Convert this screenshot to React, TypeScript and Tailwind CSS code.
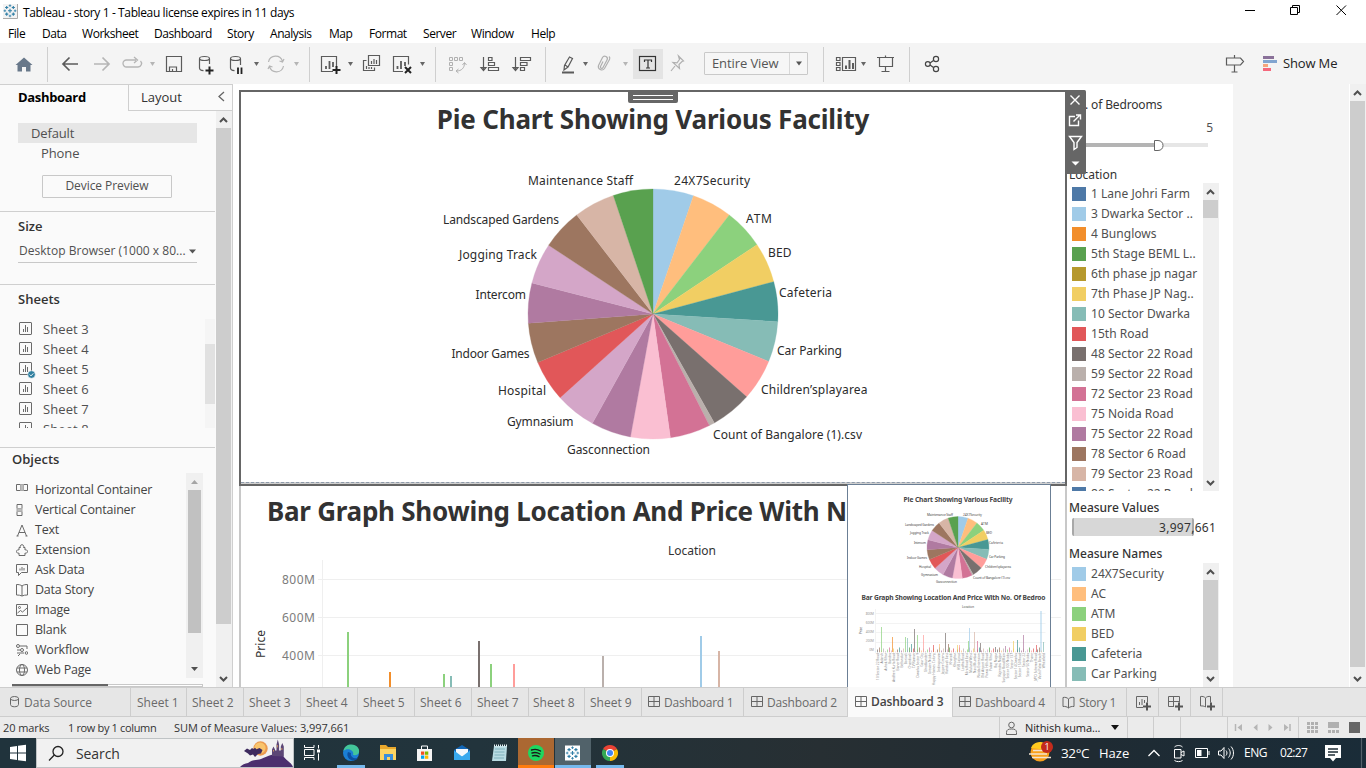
import React from "react";

type Kids = { children?: React.ReactNode };

const SLICES: [string, number][] = [
  ["#a0cbe8", 18.9], ["#ffbe7d", 37.6], ["#8cd17d", 56.3], ["#f1ce63", 75], ["#499894", 93.5],
  ["#86bcb6", 112.3], ["#ff9d9a", 131.5], ["#79706e", 150.6], ["#bab0ac", 153.2], ["#d37295", 172],
  ["#fabfd2", 190.4], ["#b07aa1", 209], ["#d4a6c8", 228], ["#e15759", 247.2], ["#9d7660", 265.8],
  ["#b07aa1", 284.4], ["#d4a6c8", 303.4], ["#9d7660", 322.4], ["#d7b5a6", 341.5], ["#59a14f", 360],
];

function Pie({ cx, cy, r }: { cx: number; cy: number; r: number }) {
  const pt = (a: number) => {
    const t = (a * Math.PI) / 180;
    return `${(cx + r * Math.sin(t)).toFixed(2)} ${(cy - r * Math.cos(t)).toFixed(2)}`;
  };
  return (
    <g>
      {SLICES.map(([c, end], i) => {
        const start = i ? SLICES[i - 1][1] : 0;
        return <path key={i} fill={c} stroke={c} strokeWidth={0.3} d={`M${cx} ${cy}L${pt(start)}A${r} ${r} 0 0 1 ${pt(end)}Z`} />;
      })}
    </g>
  );
}

const LABELS: [string, number, number, number][] = [
  ["24X7Security", 674, 185, 76], ["ATM", 746, 223, 26], ["BED", 768, 257, 23.5], ["Cafeteria", 779, 297, 53],
  ["Car Parking", 777, 355, 65], ["Children’splayarea", 761, 394, 106.5], ["Count of Bangalore (1).csv", 713, 439, 149],
  ["Gasconnection", 567, 454, 83], ["Gymnasium", 507, 426, 66.5], ["Hospital", 498, 395, 48],
  ["Indoor Games", 451.5, 358, 78], ["Intercom", 475.5, 299, 50.5], ["Jogging Track", 459, 259, 78],
  ["Landscaped Gardens", 443, 224, 116], ["Maintenance Staff", 528, 185, 105],
];

const BARS: [number, number, string][] = [
  [347, 632, "#8cd17d"], [389, 672, "#f28e2b"], [443, 674, "#8cd17d"], [450, 676, "#86bcb6"], [478, 641, "#79706e"],
  [490, 664, "#8cd17d"], [513, 664, "#ff9d9a"], [602, 656, "#bab0ac"], [700, 636, "#a0cbe8"], [718, 651, "#d7b5a6"],
];

const MINI_LABELS: [string, number, number, number][] = [
  ["Maintenance Staff", 927, 515.5, 26], ["24X7Security", 963, 515.5, 19], ["ATM", 981, 525, 7], ["BED", 986, 533.5, 6],
  ["Landscaped Gardens", 905, 525.5, 29], ["Jogging Track", 910, 534, 19], ["Intercom", 914, 544, 12], ["Cafeteria", 989, 544, 14],
  ["Indoor Games", 907, 558.5, 20], ["Car Parking", 989, 558, 16], ["Hospital", 919, 568, 12], ["Children’splayarea", 985, 568, 26],
  ["Gymnasium", 921, 575.5, 17], ["Gasconnection", 936, 582.5, 21], ["Count of Bangalore (1).csv", 973, 579, 37],
];
const MINI_BARS: [number, number, string][] = [
  [881, 627, "#8cd17d"], [892, 637, "#f28e2b"], [905, 637, "#8cd17d"], [907, 638, "#86bcb6"], [911, 644, "#499894"],
  [914, 629, "#79706e"], [917, 635, "#8cd17d"], [923, 635, "#ff9d9a"], [933, 645, "#e15759"], [939, 644, "#ffbe7d"],
  [945, 633, "#79706e"], [948, 644, "#9d7660"], [957, 645, "#f1ce63"], [959, 645, "#ff9d9a"], [968, 641, "#8cd17d"], [969, 628, "#a0cbe8"],
  [974, 632, "#d7b5a6"], [977, 641, "#d37295"], [980, 643, "#79706e"], [995, 647, "#79706e"], [1005, 646, "#b07aa1"], [1013, 641, "#f1ce63"],
  [1017, 640, "#499894"], [1023, 635, "#b07aa1"], [1036, 645, "#e15759"], [1040, 611, "#a0cbe8"], [1043, 642, "#86bcb6"],
];
const MINI_AXIS = [
  "10 Sector 22 Road", "Adarsh", "Ashok Vihar", "Bandra", "Andheri Kurla Road", "Baner Road", "Bellandur", "Borivali",
  "Chandivali", "CV Raman", "Dwarka Sector 9", "Gaur City", "Ghodbunder", "Greater Noida", "Happy Homes Colony",
  "Indirapuram", "Jaypee Greens", "Kandivali East", "Kharadi", "Kharghar", "HSR Layout", "Lodha Road", "Mira Road East",
  "Mulund West", "Navi Mumbai", "Noida Extension", "Old Airport Road", "Powai Hills Road", "Palam Vihar", "Raj Nagar",
  "Rajendra Nagar", "Sarjapur Road Main", "Sector 100 Noida", "Sector 137", "Sector 14 Dwarka", "Sector 150 Road",
  "Sector 22", "Sector 50 Noida", "Thane", "JVPD Scheme Road", "Vashi Palm Beach", "Whitefield",
];

const LOCATIONS: [string, string][] = [
  ["#4e79a7", "1 Lane Johri Farm"], ["#a0cbe8", "3 Dwarka Sector .."], ["#f28e2b", "4 Bunglows"], ["#59a14f", "5th Stage BEML L.."],
  ["#b6992d", "6th phase jp nagar"], ["#f1ce63", "7th Phase JP Nag.."], ["#86bcb6", "10 Sector Dwarka"], ["#e15759", "15th Road"],
  ["#79706e", "48 Sector 22 Road"], ["#bab0ac", "59 Sector 22 Road"], ["#d37295", "72 Sector 23 Road"], ["#fabfd2", "75 Noida Road"],
  ["#b07aa1", "75 Sector 22 Road"], ["#9d7660", "78 Sector 6 Road"], ["#d7b5a6", "79 Sector 23 Road"], ["#4e79a7", "80 Sector 22 Road"],
];
const MEASURES: [string, string][] = [
  ["#a0cbe8", "24X7Security"], ["#ffbe7d", "AC"], ["#8cd17d", "ATM"], ["#f1ce63", "BED"], ["#499894", "Cafeteria"], ["#86bcb6", "Car Parking"], ["#ff9d9a", ""],
];

/* An icon slot whose viewBox uses window coordinates, so neighbouring slots tile the bar. */
function Slot({ x, w, y = 43, h = 41, c = "#5b5b5b", sw = 1.2, children }: Kids & { x: number; w: number; y?: number; h?: number; c?: string; sw?: number }) {
  return (
    <svg className="shrink-0" width={w} height={h} viewBox={`${x} ${y} ${w} ${h}`} fill="none" stroke={c} strokeWidth={sw}>
      {children}
    </svg>
  );
}
const Caret = ({ x, y = 62, c = "#666" }: { x: number; y?: number; c?: string }) => <path d={`M${x + 0.5} ${y}h5l-2.500 4z`} fill={c} stroke="none" />;
const Sep = ({ x }: { x: number }) => <path d={`M${x + 0.5} 47v35`} stroke="#cfcfcf" strokeWidth={1} />;

function TableauMark({ x, y, s = 1, c = "#2f7ea6" }: { x: number; y: number; s?: number; c?: string }) {
  const plus = (a: number, b: number, r: number) => `M${a - r} ${b}h${2 * r}M${a} ${b - r}v${2 * r}`;
  return (
    <g transform={`translate(${x} ${y}) scale(${s})`} stroke={c} fill="none" strokeWidth={1.2}>
      <path d={plus(0, 0, 2.2) + plus(-3.6, -3.6, 1.7) + plus(3.6, -3.6, 1.7) + plus(-3.6, 3.6, 1.7) + plus(3.6, 3.6, 1.7)} />
      <path d={plus(0, -5.6, 1.4) + plus(0, 5.6, 1.4) + plus(-5.6, 0, 1.4) + plus(5.6, 0, 1.4)} strokeWidth={0.9} />
    </g>
  );
}

function TitleBar() {
  return (
    <header className="flex h-[24px] shrink-0 items-center bg-white">
      <svg width="23" height="24" viewBox="0 0 23 24">
        <rect x="3" y="4" width="14" height="14" fill="#f3f3f3" />
        <path d="M3 18.5h14.5V4" stroke="#aaa" fill="none" />
        <TableauMark x={10} y={10.8} s={0.92} />
      </svg>
      <span className="w-[280px] pt-px font-['Open_Sans','Noto_Sans',sans-serif] text-[12px] tracking-[-0.38px] text-black">
        Tableau - story 1 - Tableau license expires in 11 days
      </span>
      <svg className="ml-auto" width="131" height="24" viewBox="1235 0 131 24" fill="none" stroke="#000">
        <path d="M1245 10.5h10M1290.500 7.500h7v7h-7zM1292.500 7v-1.500h7v7h-2M1336.500 5.500l9.500 9.500M1346 5.500l-9.500 9.500" />
      </svg>
    </header>
  );
}

function MenuBar() {
  return (
    <nav className="flex h-[19px] shrink-0 items-center bg-white pl-2 font-['Open_Sans','Noto_Sans',sans-serif] text-[12px] tracking-[-0.45px] text-black">
      <span className="w-[34px]">File</span>
      <span className="w-[40px]">Data</span>
      <span className="w-[72px]">Worksheet</span>
      <span className="w-[73px]">Dashboard</span>
      <span className="w-[43px]">Story</span>
      <span className="w-[59px]">Analysis</span>
      <span className="w-[40px]">Map</span>
      <span className="w-[54px]">Format</span>
      <span className="w-[48px]">Server</span>
      <span className="w-[60px]">Window</span>
      <span>Help</span>
    </nav>
  );
}

function Toolbar() {
  return (
    <div className="flex h-[41px] shrink-0 bg-[#f4f4f4]">
      <Slot x={0} w={50}>
        <path d="M24 57.500l8.500 7.500h-2v6.500h-4.500v-4.500h-4v4.500h-4.500v-6.500h-2z" fill="#68788a" stroke="none" />
        <Sep x={47} />
      </Slot>
      <Slot x={50} w={110} sw={1.7}>
        <path d="M78 64H63M69.500 57.500L63 64l6.500 6.500" />
        <path d="M94 64h15M102.500 57.500L109 64l-6.500 6.500" stroke="#b5b5b5" />
        <path d="M136 60h-9.500a3.500 3.500 0 0 0 0 7h11.500a3.500 3.500 0 0 0 2.500-6M134 57l3.500 3-3.500 3" stroke="#b5b5b5" strokeWidth={1.3} />
        <Caret x={149.500} c="#b5b5b5" />
      </Slot>
      <Slot x={160} w={151}>
        <path d="M166.500 56.500h15v15h-15zM169.500 71.500v-4.500h7v4.500M172.500 71v-2" />
        <path d="M209.500 64v-5M199.500 59v9c0 1.600 2 2.500 4 2.700" />
        <ellipse cx="204.500" cy="58.500" rx="5" ry="2" />
        <path d="M205.500 70.500h8M209.500 66.500v8" stroke="#222" strokeWidth={2} />
        <path d="M240.500 65v-6M230.500 59v9c0 1.600 2 2.500 4 2.700" />
        <ellipse cx="235.500" cy="58.500" rx="5" ry="2" />
        <path d="M238 67.500v6.500M241.500 67.500v6.500" stroke="#222" strokeWidth={1.8} />
        <Caret x={253.500} />
        <path d="M268.500 62a7.200 7.200 0 0 1 14-0.500M283.500 66a7.200 7.200 0 0 1-14 0.500M279.500 61l3 1 1.500-3M272.500 67l-3-1-1.500 3" stroke="#b5b5b5" />
        <Caret x={293.500} c="#b5b5b5" />
        <Sep x={309} />
      </Slot>
      <Slot x={311} w={126}>
        <path d="M333 71.500h-11.500v-15h15V67" />
        <path d="M326 69v-3M329.500 69v-8M333 67v-5" strokeWidth={1.8} />
        <path d="M332.500 70h8M336.500 66v8" stroke="#222" strokeWidth={2} />
        <Caret x={347.500} />
        <path d="M368.500 55.500h11v10h-11zM366.500 60.500h-3v10h11v-3" />
        <path d="M371.500 64v-3M374 64v-5M376.500 64v-4M366.500 69v-3M369 69v-2M371.500 69v-2" />
        <path d="M403 71.500h-9.500v-15h15v8" />
        <path d="M397.500 69v-3M401 69v-8M405 66v-4" strokeWidth={1.800} />
        <path d="M405 67l6 6M411 67l-6 6" stroke="#222" strokeWidth={2} />
        <Caret x={419.500} />
        <Sep x={435} />
      </Slot>
      <Slot x={437} w={110}>
        <path d="M449.500 57.500h3v3h-3zM454.500 57.500h3v3h-3zM459.500 57.500h3v3h-3zM449.500 62.500h3v3h-3zM449.500 67.500h3v3h-3zM464.500 63c0 5-3 8-8 8M462.500 65l2-2.500 2 2.500M458.500 69l-2.500 2 2.500 2" stroke="#b0b0b0" strokeWidth={1} />
        <path d="M483.500 57v13M481 67.500l2.500 3 2.500-3zM488.500 57.500h3.500v3h-3.500zM488.500 62.500h6v3h-6zM488.500 67.500h10v3h-10z" />
        <path d="M515.500 57v13M513 67.500l2.500 3 2.500-3zM520.500 57.500h10v3h-10zM520.500 62.500h6.500v3h-6.500zM520.500 67.500h4v3h-4z" />
        <Sep x={545} />
      </Slot>
      <Slot x={547} w={157}>
        <path d="M562 72.500h12" strokeWidth={2} />
        <path d="M569.500 57l3 1.500-4.500 8.500-4 3 0.500-4.500zM565 65l3 2" />
        <Caret x={582.500} />
        <path d="M603 61.500l-2.500 5a1.300 1.300 0 0 0 2.500 1l4-7.500a2.500 2.500 0 0 0-4.500-2.500l-4 8a3.400 3.400 0 0 0 6 3l5-9a2.500 2.500 0 0 0-0.500-3" stroke="#b0b0b0" />
        <Caret x={622.500} c="#b5b5b5" />
        <rect x="633" y="49" width="30" height="30" fill="#e4e4e4" stroke="none" />
        <rect x="639.500" y="56.500" width="16" height="14" stroke="#333" />
        <path d="M644.500 62v-2h7v2M648 60v8M646 68h4" stroke="#333" />
        <path d="M678.500 56l5 5-1.500 0.500-3 3 0.500 4-6.500-6 4 0.300 2.500-3.300zM675 66l-4 5" stroke="#b0b0b0" />
      </Slot>
      <div className="flex w-[106px] items-start pt-[9px]">
        <div className="flex h-[23px] w-[104px] items-center rounded-[1px] border border-[#c9c9c9] bg-[#f6f6f6]">
          <span className="w-[84px] pl-[7px] font-['Open_Sans','Noto_Sans',sans-serif] text-[13px] tracking-[-0.1px] text-[#555]">Entire View</span>
          <span className="flex h-full w-[18px] items-center justify-center border-l border-[#d8d8d8]">
            <svg width="8" height="5"><path d="M1 0.500h6l-3 4z" fill="#555" /></svg>
          </span>
        </div>
      </div>
      <Slot x={810} w={101}>
        <Sep x={823} />
        <path d="M836.500 57.500h3.500v3h-3.500zM836.500 62.500h3.500v3h-3.500zM836.500 67.500h3.500v3h-3.500zM842.500 57.500h13v13h-13z" />
        <path d="M846 69v-3.500M849.500 69v-9M853 69v-6" strokeWidth={2} />
        <Caret x={860.500} />
        <path d="M877 57.500h17M879.500 58v8.500h13V58M885.500 55.500v2M885.500 66.500v4.500M881.500 71.500h8" />
        <Sep x={909} />
      </Slot>
      <Slot x={911} w={40} c="#444">
        <circle cx="927.800" cy="64" r="2.400" />
        <circle cx="936" cy="59" r="2.600" />
        <circle cx="936" cy="69" r="2.600" />
        <path d="M930 63l3.500-2.500M930 65l3.500 2.500" />
      </Slot>
      <div className="ml-auto flex items-center">
        <Slot x={1220} w={63}>
          <path d="M1226.500 58h14l3 3.500-3 3.500h-14zM1234.500 55v3M1234.500 65v7M1231.500 72h6" />
          <path d="M1263 57.500h11" stroke="#8a7199" strokeWidth={3} />
          <path d="M1263 61.500h14" stroke="#82a5d0" strokeWidth={3} />
          <path d="M1263 65.500h5" stroke="#f5a57c" strokeWidth={3} />
          <path d="M1263 69.500h8" stroke="#f5687c" strokeWidth={3} />
        </Slot>
        <span className="w-[83px] font-['Open_Sans','Noto_Sans',sans-serif] text-[13px] tracking-[-0.15px] text-[#222]">Show Me</span>
      </div>
    </div>
  );
}

function VScroll({ thumb }: { thumb: string }) {
  return (
    <div className="flex w-[16px] shrink-0 flex-col bg-[#f0f0f0]">
      <svg className="shrink-0" width="16" height="17"><path d="M4 11l3.500-3.500L11 11" stroke="#505050" strokeWidth="2" fill="none" /></svg>
      <div className={thumb} />
      <svg className="mt-auto shrink-0" width="16" height="17"><path d="M4 7l3.500 3.500L11 7" stroke="#505050" strokeWidth="2" fill="none" /></svg>
    </div>
  );
}

const SheetIcon = ({ checked }: { checked?: boolean }) => (
  <svg className="shrink-0" width="25" height="20" viewBox="0 0 25 20" fill="none" stroke="#6a6a6a">
    <rect x="1.500" y="3.500" width="12" height="12" rx="0.500" />
    <path d="M5.500 13v-3M7.500 13V6M9.500 13V8" />
    {checked && (
      <g>
        <circle cx="13.500" cy="15.500" r="3.800" fill="#2f7f9f" stroke="#fafafa" strokeWidth="0.600" />
        <path d="M11.700 15.500l1.300 1.400 2.300-2.500" stroke="#fff" strokeWidth="0.900" />
      </g>
    )}
  </svg>
);

const OBJECTS: [string, React.ReactNode][] = [
  ["Horizontal Container", <><path d="M.5 4.500h4v6h-4zM7.500 4.500h4v6h-4z" /><path d="M4.500 4.500h3v6h-3z" fill="#bbb" stroke="#aaa" /></>],
  ["Vertical Container", <><path d="M1 4.500h5v4H1zM1 11.500h5v4H1z" /><path d="M1 8.500h5v3H1z" fill="#bbb" stroke="#aaa" /></>],
  ["Text", <path d="M1.500 16L6 5l4.500 11M3 12.500h6M0.500 16h2M9.500 16h2" />],
  ["Extension", <path d="M3 9V7.500h1.500a1.800 1.800 0 1 1 3 0H9V10a1.700 1.700 0 1 1 0 3v2.500H3V13a1.700 1.700 0 1 1 0-3z" />],
  ["Ask Data", <><path d="M.5 4.500h11v8h-6l-3 3v-3h-2z" /><path d="M4 10.500V8.500M6 10.500V7M8 10.500V8" stroke="#999" strokeWidth={1.500} /></>],
  ["Data Story", <path d="M6 6v10M6 6C4.500 4.700 2.500 4.500.5 4.500v10.500c2 0 4 .2 5.500 1 1.500-.8 3.500-1 5.500-1V4.500C9.500 4.500 7.500 4.700 6 6z" />],
  ["Image", <><path d="M.5 4.500h11v11H.5z" /><path d="M1.500 13l3-2.500 2 1.500 4.500-4" /><circle cx="3.500" cy="7.500" r="1" /></>],
  ["Blank", <path d="M.5 4.500h11v11H.5z" />],
  ["Workflow", <><circle cx="2" cy="6" r="1.500" /><circle cx="6" cy="10" r="1.500" /><circle cx="10.500" cy="13" r="1.300" /><path d="M4 6h7v3M1 10h3M1 13h7M2 16l2-2" /></>],
  ["Web Page", <><circle cx="6" cy="10" r="5.500" /><ellipse cx="6" cy="10" rx="2.500" ry="5.500" /><path d="M1 8h10M1 12h10" /></>],
];

function LeftPanel() {
  return (
    <aside className="flex w-[233px] shrink-0 flex-col border-r border-t border-[#cfcfcf] bg-[#fafafa] font-['Open_Sans','Noto_Sans',sans-serif] text-[#505050]">
      <div className="flex h-[26px] shrink-0">
        <div className="w-[128px] pl-[18px] pt-[2px] text-[13px] font-bold leading-[20px] tracking-[-0.32px] text-black">Dashboard</div>
        <div className="flex flex-1 border-b border-l border-[#cfcfcf] pl-[12px] pt-[2px] text-[13px] leading-[20px] text-[#333]">
          Layout
          <svg className="ml-auto mr-[6px] mt-[4px]" width="9" height="11"><path d="M7 1L2 5.500 7 10" stroke="#666" fill="none" strokeWidth="1.300" /></svg>
        </div>
      </div>
      <div className="flex min-h-0 flex-1">
        <div className="flex w-[215px] shrink-0 flex-col overflow-hidden">
          <section className="flex h-[101px] shrink-0 flex-col border-b border-[#cfcfcf] pl-[18px] pt-[12px]">
            <div className="h-[20px] w-[179px] bg-[#e6e6e6] pl-[13px] text-[13px] leading-[20px] tracking-[-0.15px]">Default</div>
            <div className="h-[20px] pl-[23px] text-[13px] leading-[20px] tracking-[-0.1px]">Phone</div>
            <div className="ml-[24px] mt-[12px] flex h-[23px] w-[130px] items-center justify-center rounded-[1px] border border-[#c8c8c8] pb-px text-[12px] tracking-[-0.07px]">Device Preview</div>
          </section>
          <section className="h-[73px] shrink-0 border-b border-[#cfcfcf] pl-[18px] pt-[4px]">
            <h3 className="text-[13px] font-semibold leading-[20px] text-[#333]">Size</h3>
            <div className="mt-[4px] flex h-[23px] w-[179px] items-center border-b border-[#c8c8c8] text-[12px]">
              <span className="w-[170px] whitespace-nowrap pl-[1px] tracking-[0.03px]">Desktop Browser (1000 x 80...</span>
              <svg width="8" height="5"><path d="M1 0.500h7l-3.500 4z" fill="#555" /></svg>
            </div>
          </section>
          <section className="flex h-[163px] shrink-0 flex-col border-b border-[#cfcfcf] pt-[3px]">
            <h3 className="pl-[18px] text-[13px] font-semibold leading-[22px] text-[#333]">Sheets</h3>
            <div className="mt-[9px] flex h-[109px] overflow-hidden">
              <div className="w-[205px] shrink-0 pl-[18px]">
                {["Sheet 3", "Sheet 4", "Sheet 5", "Sheet 6", "Sheet 7", "Sheet 8"].map((s) => (
                  <div key={s} className="flex h-[20px] items-center text-[13px] tracking-[0.1px]">
                    <SheetIcon checked={s === "Sheet 5"} />
                    <span className="pt-[2px]">{s}</span>
                  </div>
                ))}
              </div>
              <div className="w-[10px] bg-[#f5f5f5] pt-[25px]"><div className="h-[60px] bg-[#e1e1e1]" /></div>
            </div>
          </section>
          <section className="flex min-h-0 flex-1 flex-col pt-[1px]">
            <h3 className="pl-[12px] text-[13px] font-semibold leading-[20px] text-[#333]">Objects</h3>
            <div className="mt-[4px] flex h-[205px] shrink-0">
              <div className="w-[186px] pl-[16px] pt-[7px]">
                {OBJECTS.map(([name, icon]) => (
                  <div key={name} className="flex h-[20px] items-center text-[12.5px] tracking-[-0.2px] text-[#444]">
                    <svg className="mr-[7px] shrink-0" width="12" height="20" viewBox="0 0 12 20" fill="none" stroke="#6a6a6a">{icon}</svg>
                    <span className="pt-px">{name}</span>
                  </div>
                ))}
              </div>
              <div className="flex w-[17px] flex-col items-center bg-[#f0f0f0]">
                <svg width="17" height="17"><path d="M5 11h7L8.500 7z" fill="#a5a5a5" /></svg>
                <div className="h-[143px] w-[13px] bg-[#c1c1c1]" />
                <svg className="mt-auto" width="17" height="17"><path d="M5 6h7l-3.500 4z" fill="#505050" /></svg>
              </div>
            </div>
            <div className="ml-[12px] mt-[6px] flex h-[10px] w-[191px] border border-[#c8c8c8] bg-white"><div className="-ml-px -mt-px w-[96px] bg-[#666]" /></div>
          </section>
        </div>
        <div className="ml-px flex"><VScroll thumb="h-[496px] w-[15px] bg-[#cdcdcd]" /></div>
      </div>
    </aside>
  );
}

function PieZone() {
  return (
    <section className="flex h-[396px] shrink-0 flex-col border-2 border-[#666] bg-white">
      <h2 className="h-[56px] shrink-0 text-center font-['Noto_Sans','Open_Sans',sans-serif] text-[26px] font-bold leading-[55px] tracking-[-0.2px] text-[#323232]">
        Pie Chart Showing Various Facility
      </h2>
      <svg className="shrink-0" width="824" height="334" viewBox="241 148 824 334">
        <Pie cx={653} cy={314} r={125} />
        <g className="font-['Noto_Sans','Open_Sans',sans-serif]" fontSize="12" fill="#2b2b2b">
          {LABELS.map(([t, x, y, w]) => (
            <text key={t} x={x} y={y} textLength={w}>{t}</text>
          ))}
        </g>
      </svg>
      <div className="h-[2px] border-t border-dashed border-[#8f9bab] bg-[#cfcfcf]" />
    </section>
  );
}

function BarZone() {
  return (
    <section className="flex h-[201px] shrink-0 flex-col overflow-hidden border-x-2 border-[#c8c8c8] bg-white">
      <h2 className="h-[52px] shrink-0 whitespace-nowrap pl-[26px] font-['Noto_Sans','Open_Sans',sans-serif] text-[26px] font-bold leading-[51px] tracking-[-0.26px] text-[#323232]">
        Bar Graph Showing Location And Price With No. Of Bedroo
      </h2>
      <svg className="shrink-0" width="824" height="149" viewBox="241 538 824 149">
        <path d="M322.500 560v127M318 579.500h743M318 617.500h743M318 655.500h743" stroke="#efefef" />
        {BARS.map(([x, y, c]) => <rect key={x} x={x} y={y} width="2" height={690 - y} fill={c} />)}
        <g className="font-['Noto_Sans','Open_Sans',sans-serif]" fontSize="12" fill="#7c7c7c">
          <text x="282" y="584" textLength="33">800M</text>
          <text x="282" y="622" textLength="33">600M</text>
          <text x="282" y="660" textLength="33">400M</text>
          <text x="668" y="555" textLength="48" fill="#333">Location</text>
          <text transform="translate(265 658) rotate(-90)" textLength="28" fill="#333">Price</text>
        </g>
      </svg>
    </section>
  );
}

function Thumbnail() {
  return (
    <div className="absolute left-[614px] top-[400px] h-[204px] w-[204px] border border-[#6b7f95] bg-white">
      <svg width="202" height="202" viewBox="848 485 202 202">
        <Pie cx={958} cy={547.500} r={31} />
        <g className="font-['Noto_Sans','Open_Sans',sans-serif]" fill="#444">
          <text x="903.500" y="502" fontSize="6.700" fontWeight="700" textLength="109">Pie Chart Showing Various Facility</text>
          <text x="861.500" y="600" fontSize="6.700" fontWeight="700" textLength="184">Bar Graph Showing Location And Price With No. Of Bedroo</text>
          <text x="962" y="608" fontSize="3" textLength="12">Location</text>
          <text transform="translate(861.500 634) rotate(-90)" fontSize="3" textLength="7">Price</text>
          {MINI_LABELS.map(([t, x, y, w]) => <text key={t} x={x} y={y} fontSize="3.200" textLength={w}>{t}</text>)}
          {["800M", "600M", "400M", "200M", "0M"].map((t, i) => (
            <text key={t} x="874" y={615 + i * 9} fontSize="3.200" textAnchor="end" fill="#999">{t}</text>
          ))}
        </g>
        <path d="M875.500 609v42M875.500 613.500h170M875.500 623.500h170M875.500 632.500h170M875.500 642.500h170" stroke="#f3f3f3" />
        {Array.from({ length: 84 }, (_, i) => (
          <rect key={i} x={875 + i * 2} y={651.500 - ((i * 7) % 5)} width="1" height={((i * 7) % 5) + 0.800} fill={SLICES[(i * 7) % 20][0]} opacity={0.7} />
        ))}
        {MINI_BARS.map(([x, y, c], i) => <rect key={i} x={x} y={y} width={x === 1040 ? 2 : 1} height={652 - y} fill={c} opacity={x === 1040 ? 0.45 : 0.7} />)}
        <g className="font-['Noto_Sans','Open_Sans',sans-serif]" fill="#888" fontSize="3.200">
          {MINI_AXIS.map((t, i) => (
            <text key={t} transform={`translate(${878.500 + i * 4.070} 653) rotate(-90)`} textAnchor="end">{t}</text>
          ))}
        </g>
      </svg>
    </div>
  );
}

function Legend({ items, thumb }: { items: [string, string][]; thumb: string }) {
  return (
    <div className="flex min-h-0 flex-1 overflow-hidden">
      <div className="w-[136px] shrink-0 pt-px">
        {items.map(([c, t]) => (
          <div key={t} className="flex h-[20px] items-center pl-[5px]">
            <svg className="mr-[5px] shrink-0" width="14" height="14"><rect width="14" height="14" fill={c} /></svg>
            <span className="whitespace-nowrap text-[12px] leading-[20px] tracking-[0.03px] text-[#505050]">{t}</span>
          </div>
        ))}
      </div>
      <VScroll thumb={thumb} />
    </div>
  );
}

function RightColumn() {
  return (
    <section className="flex w-[166px] shrink-0 flex-col overflow-hidden bg-white font-['Noto_Sans','Open_Sans',sans-serif] text-[12px] text-[#333]">
      <div className="h-[36px] pl-[2px] pt-[11px] leading-[20px] tracking-[-0.15px]">No. of Bedrooms</div>
      <div className="h-[18px] w-[146px] text-right leading-[15px] text-[#505050]">5</div>
      <svg className="shrink-0" width="166" height="26" viewBox="1067 138 166 26">
        <path d="M1069 145h88" stroke="#b4b4b4" strokeWidth="4" />
        <path d="M1157 145h51" stroke="#e6e6e6" strokeWidth="4" />
        <path d="M1154.500 140.500h3.500c3 0 5 2 5 5s-2 5-5 5h-3.500z" fill="#fff" stroke="#666" />
      </svg>
      <div className="h-[19px] shrink-0 pl-[2px] leading-[21px]">Location</div>
      <div className="flex h-[308px] shrink-0"><Legend items={LOCATIONS} thumb="h-[18px] w-[15px] bg-[#cdcdcd]" /></div>
      <div className="mt-[7px] h-[20px] shrink-0 pl-[2px] font-medium leading-[20px]">Measure Values</div>
      <div className="ml-[5px] flex h-[18px] w-[122px] shrink-0 rounded-[2px] border-x-2 border-[#a8a8a8] bg-[#d7d7d7]">
        <span className="ml-[85px] whitespace-nowrap leading-[19px] tracking-[0.3px]">3,997,661</span>
      </div>
      <div className="mt-[8px] h-[19px] shrink-0 pl-[2px] font-medium leading-[20px]">Measure Names</div>
      <Legend items={MEASURES} thumb="h-[140px] w-[15px] bg-[#cdcdcd]" />
    </section>
  );
}

function Canvas() {
  return (
    <main className="relative flex min-w-0 flex-1 overflow-hidden bg-[#f4f4f4]">
      <div className="flex w-[834px] shrink-0 flex-col bg-white pl-[6px] pt-[6px]">
        <PieZone />
        <BarZone />
      </div>
      <RightColumn />
      <div className="flex-1" />
      <div className="flex border-l border-[#fff]"><VScroll thumb="h-[566px] w-[15px] bg-[#cdcdcd]" /></div>
      <svg className="absolute left-[395px] top-[8px]" width="50" height="11">
        <path d="M0 0h50v9q0 2-2 2H2q-2 0-2-2z" fill="#666" />
        <path d="M5 3.500h40M5 7.500h40" stroke="#fff" />
      </svg>
      <svg className="absolute left-[832px] top-[6px]" width="21" height="84" viewBox="1065 90 21 84" fill="none" stroke="#fff" strokeWidth="1.400">
        <rect x="1065" y="90" width="21" height="84" rx="1.500" fill="#666" stroke="none" />
        <path d="M1070.500 95.500l9 9M1079.500 95.500l-9 9M1075 116.500h-5.500v9h9v-5M1073.500 121.500l6-6M1076 115h4.500v4.500M1069.500 136.500h12l-4.500 6v5l-3 2v-7z" />
        <path d="M1071.500 161.500h8l-4 4z" fill="#fff" stroke="none" />
      </svg>
      <Thumbnail />
    </main>
  );
}

const GridGlyph = () => (
  <svg className="mr-[4px] shrink-0" width="12" height="12" fill="none" stroke="#666"><path d="M.5 .5h11v10H.5zM6 .5v10M.5 5.500h11" /></svg>
);
const Plus = ({ x }: { x: number }) => <path d={`M${x - 4} 706.500h8M${x} 702.500v8`} stroke="#555" strokeWidth={2} />;

function SheetTabs() {
  return (
    <div className="flex h-[30px] shrink-0 border-y border-[#cdcdcd] bg-[#e6e6e6] font-['Open_Sans','Noto_Sans',sans-serif] text-[12px] text-[#6a6a6a]">
      <div className="flex w-[131px] items-center border-r border-[#cdcdcd] pl-[10px]">
        <svg className="mr-[5px]" width="9" height="12" fill="none" stroke="#666"><ellipse cx="4.500" cy="2.500" rx="4" ry="2" /><path d="M.5 2.500v6c0 3 8 3 8 0v-6" /></svg>
        <span className="pt-[2px]">Data Source</span>
      </div>
      {[1, 2, 3, 4, 5, 6, 7, 8, 9].map((n) => (
        <div key={n} className={n === 1 ? "flex w-[56px] items-center border-r border-[#cdcdcd] pl-[6px] pt-[2px]" : n === 8 ? "flex w-[56px] items-center border-r border-[#cdcdcd] pl-[4px] pt-[2px]" : "flex w-[57px] items-center border-r border-[#cdcdcd] pl-[5px] pt-[2px]"}>{`Sheet ${n}`}</div>
      ))}
      <div className="flex w-[102px] items-center border-r border-[#cdcdcd] pl-[6px] tracking-[-0.22px]"><GridGlyph /><span className="pt-[2px]">Dashboard 1</span></div>
      <div className="flex w-[104px] items-center border-r border-[#cdcdcd] pl-[7px] tracking-[-0.17px]"><GridGlyph /><span className="pt-[2px]">Dashboard 2</span></div>
      <div className="-mb-px -mt-px flex w-[104px] items-center bg-[#fafafa] pl-[7px] font-semibold tracking-[-0.1px] text-[#444]"><GridGlyph />Dashboard 3</div>
      <div className="flex w-[104px] items-center border-x border-[#cdcdcd] pl-[6px] tracking-[-0.17px]"><GridGlyph /><span className="pt-[2px]">Dashboard 4</span></div>
      <div className="flex w-[71px] items-center border-r border-[#cdcdcd] pl-[6px] tracking-[-0.25px]">
        <svg className="mr-[4px]" width="13" height="13" fill="none" stroke="#666"><path d="M6.500 3v9M6.500 3C5 1.500 3 1 1 1.500v9c2-.3 4 .2 5.500 1.500C8 10.700 10 10.200 12 10.500v-9C10 1 8 1.500 6.500 3z" /></svg>
        <span className="pt-[2px]">Story 1</span>
      </div>
      <Slot x={1127} w={239} y={688} h={28} c="#666" sw={1}>
        <path d="M1158.500 688v28M1190.500 688v28M1222.500 688v28" stroke="#cdcdcd" />
        <path d="M1143 707.500h-6.500v-11h11v6M1139.500 705v-3M1142 705v-6M1144.500 703v-3" />
        <path d="M1174 706.500h-5.500v-10h11v6M1173.500 696.500v10M1168.500 701.500h11" />
        <path d="M1205.500 698v9c-1.500-1-3-1.200-5-1v-9.500c2-.3 3.500 0 5 1.500 1.500-1.500 3-1.800 5-1.500v6" />
        <Plus x={1147} /><Plus x={1179} /><Plus x={1211} />
      </Slot>
    </div>
  );
}

function StatusBar() {
  return (
    <div className="flex h-[21px] shrink-0 items-center bg-[#ebebeb] font-['Open_Sans','Noto_Sans',sans-serif] text-[11px] text-[#333]">
      <span className="w-[65px] pl-[3px] pt-[2px] tracking-[-0.1px]">20 marks</span>
      <span className="w-[109px] pl-[3px] pt-[2px] tracking-[-0.35px]">1 row by 1 column</span>
      <span className="w-[300px] pt-[2px] tracking-[-0.05px]">SUM of Measure Values: 3,997,661</span>
      <div className="ml-auto flex h-full w-[128px] items-center border-l border-[#cdcdcd] pl-[6px]">
        <svg className="mr-[8px]" width="11" height="14" fill="none" stroke="#666"><circle cx="5.500" cy="4" r="2.800" /><path d="M.5 13.500v-2c0-3 2-3.500 5-3.500s5 .5 5 3.500v2z" /></svg>
        <span className="w-[86px] pt-[2px] tracking-[-0.1px] text-[#222]">Nithish kuma...</span>
        <svg width="8" height="6"><path d="M0 0h8L4 5z" fill="#111" /></svg>
      </div>
      <Slot x={1127} w={239} y={717} h={21} c="#cdcdcd" sw={1}>
        <path d="M1127.500 717v21M1153.500 717v21M1180.500 717v21M1227.500 717v21M1298.500 717v21" />
        <path d="M1235.500 724v7" stroke="#b5b5b5" strokeWidth={1.500} />
        <path d="M1242 724v7l-4.500-3.500zM1257.500 724v7l-4-3.500zM1268.500 724v7l4-3.500zM1284 724v7l4.500-3.500z" fill="#b5b5b5" stroke="none" />
        <path d="M1290 724v7" stroke="#b5b5b5" strokeWidth={1.500} />
        <path d="M1307 723.500h11M1307 727.500h11M1307 731.500h11" stroke="#b0b0b0" strokeWidth={3} strokeDasharray="3 1" />
        <path d="M1328 722h11v6h-11zM1328 730h3v3h-3zM1332 730h3v3h-3zM1336 730h3v3h-3z" fill="#b0b0b0" stroke="none" />
        <path d="M1349 722h11v11h-11z" fill="#666" stroke="none" />
      </Slot>
    </div>
  );
}

function Taskbar() {
  return (
    <footer className="flex h-[30px] shrink-0 items-center bg-[linear-gradient(90deg,#20333c_0%,#22343c_35%,#272f33_60%,#1f2b33_80%,#1a2c38_100%)] font-['Open_Sans','Noto_Sans',sans-serif] text-white">
      <Slot x={0} w={36} y={738} h={30}>
        <path d="M10 747l7-1v6.500h-7zM18 745.800l8-1v7.700h-8zM10 753.500h7v6.500l-7-1zM18 753.500h8v7.700l-8-1z" fill="#fff" stroke="none" />
      </Slot>
      <div className="flex h-[30px] w-[258px] items-center border border-[#bfc3c5] bg-[#f1f1f1]">
        <svg className="ml-[11px] mr-[11px]" width="17" height="17" fill="none" stroke="#222" strokeWidth="1.300"><circle cx="10" cy="6.500" r="5" /><path d="M6.300 10L1 15.500" /></svg>
        <span className="text-[14px] tracking-[-0.1px] text-[#333]">Search</span>
        <svg className="ml-auto" width="54" height="28" viewBox="239 739 54 28">
          <circle cx="260.500" cy="748.500" r="7.200" fill="#eb9a50" />
          <circle cx="260" cy="748" r="5.600" fill="#f9c46c" />
          <path d="M244 751l3-2.500 3 1.500 2-2 1.500 1 1.500-1.300 1.500 1.600 3-1.300 3 2-1.500 3.500-3 .5-3 3-2-2.500-3 1-2-2z" fill="#3d2a5e" />
          <path d="M240 767c2-2.500 5-3.500 8-4 4-3.500 9-2.500 13-4 4-1.500 7-3.500 10-4l2-.5h9c2 3 4 5 6 6.500 2 1.500 4 3.500 5 6z" fill="#4c2f6e" />
          <path d="M272 756v-6.500l1.500-3 1.500 3v1h1.500v-6l1.300-5 1.300 5v6h1.700v-4l1.500-3.500 1.500 3.500v10z" fill="#5c4675" />
          <path d="M277.300 745v2.500M273.500 750v1.500M281.800 748v2" stroke="#e9a45a" strokeWidth="0.800" />
        </svg>
      </div>
      <Slot x={294} w={224} y={738} h={30} c="#fff" sw={1}>
        <path d="M304.500 745v2.500h9.500V745M304.500 749.500h9.500v6h-9.500zM304.500 760v-2.500h9.500v2.500M318.500 745v3.500M318.500 753.500v7" />
        <path d="M317 749.500h3v3h-3z" fill="#fff" stroke="none" />
        <path d="M337 766.500h28" stroke="#76b9ed" strokeWidth={3} />
        <circle cx="351" cy="753" r="8" fill="#1b7fd4" stroke="none" />
        <path d="M343.500 751c1-5 4-6.500 8-6.500 5 0 8.500 4 7.500 8-.5 2-3 3-6 2.500 2-5-6-8-9.500-4z" fill="#43c69a" stroke="none" />
        <path d="M348 752c-2 4 1 8 5 8.500 2 0 4-.8 5-2.500-4 1-8-1-7-5z" fill="#0c4f9e" stroke="none" />
        <path d="M380 745h6l2 2h8v13h-16z" fill="#e9a82c" stroke="none" />
        <path d="M380 749h16v11h-16z" fill="#fcd462" stroke="none" />
        <path d="M384 760v-6h9v6h-3v-3h-3v3z" fill="#3a8fdc" stroke="none" />
        <path d="M417 749h15v12h-15z" fill="#f5f5f5" stroke="none" />
        <path d="M421.500 749v-3h6v3" />
        <path d="M421 751.500h3.300v3.300H421z" fill="#f25022" stroke="none" />
        <path d="M425 751.500h3.300v3.300H425z" fill="#7fba00" stroke="none" />
        <path d="M421 755.500h3.300v3.300H421z" fill="#00a4ef" stroke="none" />
        <path d="M425 755.500h3.300v3.300H425z" fill="#ffb900" stroke="none" />
        <path d="M454 750l8-5 8 5v10h-16z" fill="#1266b5" stroke="none" />
        <path d="M456 749h12v5l-6 3-6-3z" fill="#f4f8fc" stroke="none" />
        <path d="M454 750.500l8 6 8-6v9.500h-16z" fill="#38a9ee" stroke="none" />
        <path d="M494 746h13l-1 15h-14z" fill="#b9dbe2" stroke="none" />
        <path d="M495 749h10M494.500 752h10M494.500 755h10M494 758h10" stroke="#6fa6b3" strokeWidth={0.800} />
        <path d="M494 745.500h13" stroke="#e9f3f5" strokeDasharray="1 1" strokeWidth={2} />
      </Slot>
      <Slot x={518} w={112} y={738} h={30}>
        <path d="M518 738h36v30h-36z" fill="#ab6832" stroke="none" />
        <path d="M518 766.500h36" stroke="#ff7b0f" strokeWidth={3} />
        <circle cx="536" cy="753" r="8" fill="#1ed760" stroke="none" />
        <path d="M531.500 750c3-1 6.500-.6 9 1M532 753c2.500-.8 5.500-.5 8 1M532.500 755.800c2-.6 4.500-.4 6.500.8" stroke="#1a1a1a" strokeWidth={1.400} strokeLinecap="round" />
        <path d="M555 738h36v30h-36z" fill="#51626a" stroke="none" />
        <path d="M555 766.500h36M596 766.500h28" stroke="#76b9ed" strokeWidth={3} />
        <path d="M565 745.500h15v15h-15z" fill="#fff" stroke="none" />
        <TableauMark x={572.500} y={753} s={0.950} />
        <path d="M610 753L603.070 749A8 8 0 0 1 616.930 749z" fill="#ea4335" stroke="none" />
        <path d="M610 753L616.930 749A8 8 0 0 1 610 761z" fill="#fbbc05" stroke="none" />
        <path d="M610 753L610 761A8 8 0 0 1 603.070 749z" fill="#34a853" stroke="none" />
        <circle cx="610" cy="753" r="4" fill="#fff" stroke="none" />
        <circle cx="610" cy="753" r="3" fill="#4285f4" stroke="none" />
      </Slot>
      <div className="ml-auto flex items-center">
        <Slot x={1025} w={36} y={738} h={30}>
          <circle cx="1040" cy="752" r="9.500" fill="#f9a01b" stroke="none" />
          <path d="M1031 748a9.500 9.500 0 0 1 14-4.500l-1 6z" fill="#ffc91f" stroke="none" />
          <path d="M1033 750.500h10M1029 754h18M1032 757.500h19" stroke="#f3e3cf" strokeWidth={1.600} />
          <circle cx="1047" cy="747" r="6" fill="#c42b1c" stroke="none" />
          <text x="1044.500" y="750.300" fontSize="9" fill="#fff" stroke="none">1</text>
        </Slot>
        <span className="w-[38px] text-[13.500px] tracking-[-0.4px]">32°C</span>
        <span className="w-[44px] pt-px text-[13px]">Haze</span>
        <Slot x={1143} w={101} y={738} h={30} c="#fff" sw={1}>
          <path d="M1148.500 756l5.500-5.500 5.500 5.500" strokeWidth={1.300} />
          <path d="M1174.500 749.500h6.500v8.500h-6.500zM1181 752.500l3-1.500v5l-3-1.500M1174.500 747c2-2 6-2 8 0M1174.500 760.500c2 1.500 6 1.500 8 0" />
          <path d="M1195.500 748.500h12v9h-12zM1209 751v4" />
          <path d="M1197 750h4.500v6h-4.500z" fill="#fff" stroke="none" />
          <path d="M1218.500 751h2.500l3-3.500v11l-3-3.500h-2.500zM1226 750.500c1.300 1.500 1.300 3.500 0 5M1228.500 748.500c2.300 2.600 2.300 6.400 0 9M1231 746.500c3.300 3.600 3.300 9.400 0 13" />
        </Slot>
        <span className="w-[36px] text-[12px] tracking-[-0.5px]">ENG</span>
        <span className="w-[40px] text-[12px] tracking-[-0.7px]">02:27</span>
        <Slot x={1320} w={46} y={738} h={30}>
          <path d="M1325 745h16v13h-5l-3 3.500-3-3.500h-5z" fill="#fff" stroke="none" />
          <path d="M1328 749h10M1328 752h10M1328 755h7" stroke="#1f2e36" strokeWidth={1.300} />
          <path d="M1361.500 738v30" stroke="#53616a" />
        </Slot>
      </div>
    </footer>
  );
}

export default function App() {
  return (
    <div className="flex h-[768px] w-[1366px] flex-col overflow-hidden bg-white">
      <TitleBar />
      <MenuBar />
      <Toolbar />
      <div className="flex h-[603px] shrink-0">
        <LeftPanel />
        <Canvas />
      </div>
      <SheetTabs />
      <StatusBar />
      <Taskbar />
    </div>
  );
}
